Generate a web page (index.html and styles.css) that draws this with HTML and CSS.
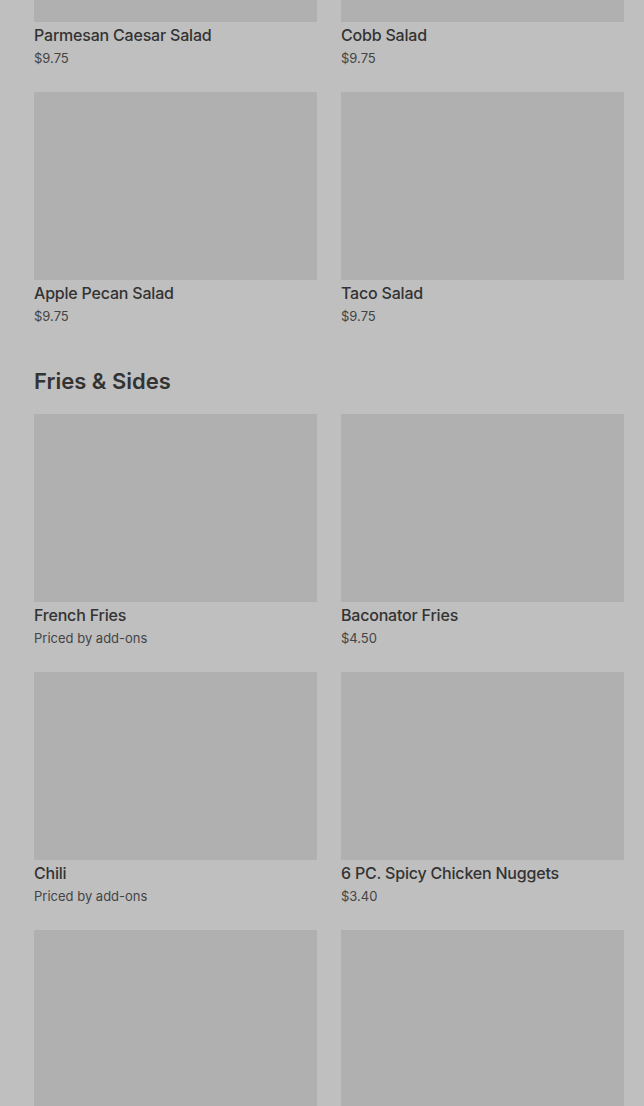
FILE: index.html
```html
<!DOCTYPE html>
<html>
<head>
    <link rel="stylesheet" href="styles.css">
</head>
<body>
    <div class="menu">
        <section class="section first">
            <div class="grid">
                <div class="item">
                    <div class="thumb"></div>
                    <div class="name">Parmesan Caesar Salad</div>
                    <div class="price">$9.75</div>
                </div>
                <div class="item">
                    <div class="thumb"></div>
                    <div class="name">Cobb Salad</div>
                    <div class="price">$9.75</div>
                </div>
                <div class="item">
                    <div class="thumb"></div>
                    <div class="name">Apple Pecan Salad</div>
                    <div class="price">$9.75</div>
                </div>
                <div class="item">
                    <div class="thumb"></div>
                    <div class="name">Taco Salad</div>
                    <div class="price">$9.75</div>
                </div>
            </div>
        </section>

        <section class="section">
            <h2 class="section-title">Fries &amp; Sides</h2>
            <div class="grid">
                <div class="item">
                    <div class="thumb"></div>
                    <div class="name">French Fries</div>
                    <div class="price">Priced by add-ons</div>
                </div>
                <div class="item">
                    <div class="thumb"></div>
                    <div class="name">Baconator Fries</div>
                    <div class="price">$4.50</div>
                </div>
                <div class="item">
                    <div class="thumb"></div>
                    <div class="name">Chili</div>
                    <div class="price">Priced by add-ons</div>
                </div>
                <div class="item">
                    <div class="thumb"></div>
                    <div class="name">6 PC. Spicy Chicken Nuggets</div>
                    <div class="price">$3.40</div>
                </div>
                <div class="item">
                    <div class="thumb"></div>
                </div>
                <div class="item">
                    <div class="thumb"></div>
                </div>
            </div>
        </section>
    </div>
</body>
</html>
```

FILE: styles.css
```css
html, body {
    margin: 0;
    background-color: #bfbfbf;
    overflow: hidden;
}
body {
    font-family: Inter, "Noto Sans", sans-serif;
    color: #333333;
}
.menu {
    padding: 0 20px 0 34px;
}
.section.first {
    margin-top: -166px;
}
.section-title {
    margin: 41px 0 19px 0;
    font-size: 22px;
    line-height: 28px;
    font-weight: 600;
    color: #333333;
}
.grid {
    display: grid;
    grid-template-columns: 1fr 1fr;
    column-gap: 24px;
    row-gap: 24px;
}
.item {
    min-height: 234px;
}
.thumb {
    height: 188px;
    background-color: #b0b0b0;
}
.name {
    margin-top: 2px;
    font-size: 16px;
    line-height: 22px;
    font-weight: 500;
    letter-spacing: -0.2px;
    color: #333333;
}
.price {
    margin-top: 2px;
    font-size: 13px;
    line-height: 20px;
    color: #444444;
}
```
